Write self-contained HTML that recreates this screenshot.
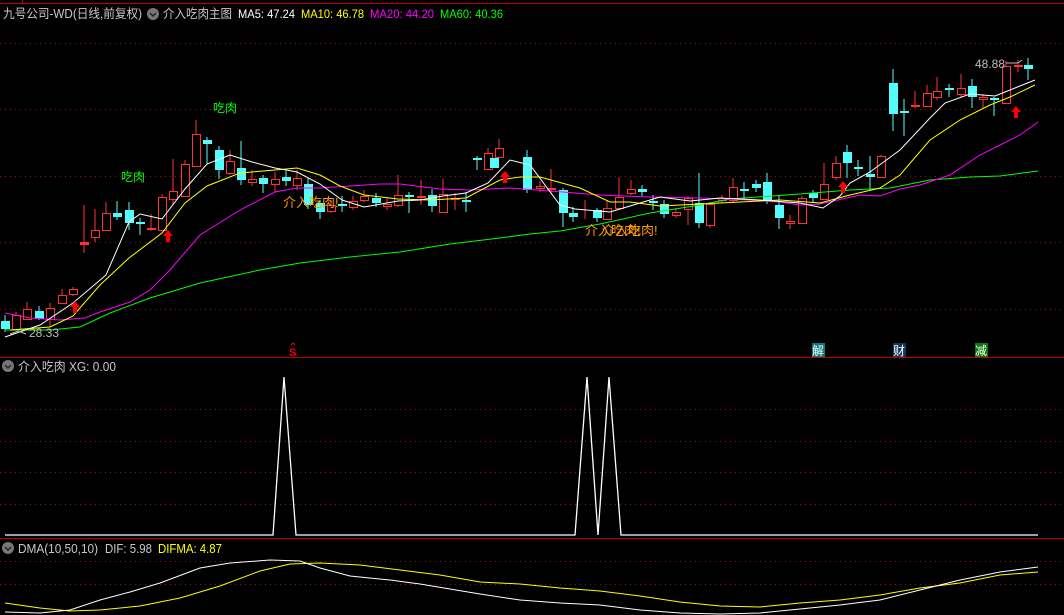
<!DOCTYPE html>
<html><head><meta charset="utf-8"><style>
html,body{margin:0;padding:0;background:#000;width:1064px;height:615px;overflow:hidden}
svg{display:block}
text{font-family:"Liberation Sans","Noto Sans CJK SC",sans-serif}
</style></head><body>
<svg width="1064" height="615" viewBox="0 0 1064 615" xmlns="http://www.w3.org/2000/svg">
<rect width="1064" height="615" fill="#000"/>
<!-- borders -->
<g shape-rendering="crispEdges">
<line x1="0" y1="3.5" x2="1064" y2="3.5" stroke="#c00000"/>
<line x1="22.5" y1="0" x2="22.5" y2="4" stroke="#c00000"/>
<line x1="0" y1="357.5" x2="1064" y2="357.5" stroke="#c00000"/>
<line x1="0" y1="538.5" x2="1064" y2="538.5" stroke="#c00000"/>
<!-- grid -->
<g stroke="#9a1010" stroke-dasharray="1,4">
<line x1="0" y1="43.5" x2="1064" y2="43.5"/><line x1="0" y1="109.5" x2="1064" y2="109.5"/>
<line x1="0" y1="176.5" x2="1064" y2="176.5"/><line x1="0" y1="242.5" x2="1064" y2="242.5"/>
<line x1="0" y1="309.5" x2="1064" y2="309.5"/>
<line x1="0" y1="409.5" x2="1064" y2="409.5"/><line x1="0" y1="441.5" x2="1064" y2="441.5"/>
<line x1="0" y1="472.5" x2="1064" y2="472.5"/><line x1="0" y1="504.5" x2="1064" y2="504.5"/>
<line x1="0" y1="561.5" x2="1064" y2="561.5"/><line x1="0" y1="584.5" x2="1064" y2="584.5"/>
</g>
</g>
<!-- header -->
<text x="3" y="18" font-size="12.5" fill="#c8c8c8" textLength="139" lengthAdjust="spacingAndGlyphs">九号公司-WD(日线,前复权)</text>
<circle cx="153" cy="14" r="6" fill="#777"/><path d="M150 13l3 3 3-3" stroke="#222" stroke-width="1.5" fill="none"/>
<text x="163" y="18" font-size="12.5" fill="#c8c8c8" textLength="69" lengthAdjust="spacingAndGlyphs">介入吃肉主图</text>
<text x="238" y="18" font-size="12" fill="#fff" textLength="57" lengthAdjust="spacingAndGlyphs">MA5: 47.24</text>
<text x="301" y="18" font-size="12" fill="#ffff00" textLength="63" lengthAdjust="spacingAndGlyphs">MA10: 46.78</text>
<text x="370" y="18" font-size="12" fill="#ff00ff" textLength="64" lengthAdjust="spacingAndGlyphs">MA20: 44.20</text>
<text x="440" y="18" font-size="12" fill="#00ff00" textLength="63" lengthAdjust="spacingAndGlyphs">MA60: 40.36</text>

<!-- wicks -->
<g stroke-width="1">
<g stroke="#ff3232">
<line x1="16" y1="312" x2="16" y2="330"/><line x1="27" y1="302" x2="27" y2="320"/><line x1="50" y1="303" x2="50" y2="327"/>
<line x1="62" y1="289" x2="62" y2="304"/><line x1="73" y1="287" x2="73" y2="296"/><line x1="84" y1="205" x2="84" y2="253"/>
<line x1="95" y1="209" x2="95" y2="242"/><line x1="106" y1="202" x2="106" y2="231"/><line x1="151" y1="214" x2="151" y2="231"/>
<line x1="162" y1="194" x2="162" y2="231"/><line x1="173" y1="159" x2="173" y2="205"/><line x1="185" y1="160" x2="185" y2="197"/>
<line x1="196" y1="120" x2="196" y2="167"/><line x1="230" y1="150" x2="230" y2="175"/><line x1="252" y1="170" x2="252" y2="186"/>
<line x1="275" y1="172" x2="275" y2="192"/><line x1="297" y1="170" x2="297" y2="190"/><line x1="331" y1="200" x2="331" y2="213"/>
<line x1="353" y1="196" x2="353" y2="210"/><line x1="364" y1="190" x2="364" y2="202"/><line x1="387" y1="198" x2="387" y2="210"/>
<line x1="398" y1="175" x2="398" y2="207"/><line x1="421" y1="180" x2="421" y2="205"/><line x1="443" y1="179" x2="443" y2="213"/>
<line x1="455" y1="193" x2="455" y2="210"/><line x1="488" y1="148" x2="488" y2="170"/><line x1="499" y1="139" x2="499" y2="158"/>
<line x1="540" y1="181" x2="540" y2="192"/><line x1="551" y1="169" x2="551" y2="193"/><line x1="585" y1="200" x2="585" y2="219"/>
<line x1="607" y1="200" x2="607" y2="220"/><line x1="619" y1="177" x2="619" y2="210"/><line x1="631" y1="180" x2="631" y2="195"/>
<line x1="676" y1="208" x2="676" y2="218"/><line x1="688" y1="196" x2="688" y2="225"/><line x1="710" y1="202" x2="710" y2="228"/>
<line x1="722" y1="195" x2="722" y2="203"/><line x1="733" y1="178" x2="733" y2="202"/><line x1="790" y1="215" x2="790" y2="229"/>
<line x1="802" y1="196" x2="802" y2="224"/><line x1="824" y1="163" x2="824" y2="200"/><line x1="836" y1="156" x2="836" y2="180"/>
<line x1="881" y1="155" x2="881" y2="178"/><line x1="915" y1="91" x2="915" y2="108"/><line x1="927" y1="85" x2="927" y2="107"/>
<line x1="937" y1="77" x2="937" y2="100"/><line x1="961" y1="74" x2="961" y2="97"/><line x1="983" y1="94" x2="983" y2="108"/>
<line x1="1006" y1="61" x2="1006" y2="104"/><line x1="1018" y1="60" x2="1018" y2="72"/>
</g>
<g stroke="#54fcfc">
<line x1="5" y1="315" x2="5" y2="332"/><line x1="39" y1="306" x2="39" y2="320"/><line x1="117" y1="201" x2="117" y2="220"/>
<line x1="129" y1="202" x2="129" y2="230"/><line x1="140" y1="218" x2="140" y2="235"/><line x1="207" y1="137" x2="207" y2="164"/>
<line x1="219" y1="146" x2="219" y2="179"/><line x1="241" y1="141" x2="241" y2="185"/><line x1="263" y1="175" x2="263" y2="193"/>
<line x1="286" y1="171" x2="286" y2="186"/><line x1="308" y1="178" x2="308" y2="209"/><line x1="320" y1="200" x2="320" y2="219"/>
<line x1="342" y1="196" x2="342" y2="212"/><line x1="376" y1="193" x2="376" y2="207"/><line x1="409" y1="192" x2="409" y2="213"/>
<line x1="432" y1="189" x2="432" y2="212"/><line x1="466" y1="192" x2="466" y2="212"/><line x1="477" y1="156" x2="477" y2="170"/>
<line x1="527" y1="150" x2="527" y2="193"/><line x1="563" y1="188" x2="563" y2="227"/><line x1="573" y1="207" x2="573" y2="222"/>
<line x1="597" y1="208" x2="597" y2="222"/><line x1="642" y1="185" x2="642" y2="197"/><line x1="653" y1="195" x2="653" y2="210"/>
<line x1="664" y1="200" x2="664" y2="218"/><line x1="699" y1="173" x2="699" y2="228"/><line x1="744" y1="182" x2="744" y2="200"/>
<line x1="756" y1="180" x2="756" y2="192"/><line x1="767" y1="173" x2="767" y2="204"/><line x1="779" y1="195" x2="779" y2="229"/>
<line x1="813" y1="190" x2="813" y2="203"/><line x1="847" y1="145" x2="847" y2="178"/><line x1="858" y1="160" x2="858" y2="176"/>
<line x1="870" y1="156" x2="870" y2="190"/><line x1="893" y1="69" x2="893" y2="131"/><line x1="904" y1="99" x2="904" y2="136"/>
<line x1="949" y1="84" x2="949" y2="97"/><line x1="972" y1="79" x2="972" y2="108"/><line x1="994" y1="97" x2="994" y2="116"/>
<line x1="1028" y1="58" x2="1028" y2="80"/>
</g>
</g>
<!-- red hollow bodies -->
<g fill="#000" stroke="#ff3232">
<rect x="12.5" y="315.5" width="8" height="14"/><rect x="23.5" y="309.5" width="8" height="10"/><rect x="46.5" y="308.5" width="8" height="11"/>
<rect x="58.5" y="295.5" width="8" height="8"/><rect x="69.5" y="289.5" width="8" height="5"/><rect x="91.5" y="230.5" width="8" height="7"/>
<rect x="102.5" y="213.5" width="8" height="17"/><rect x="158.5" y="197.5" width="8" height="33"/><rect x="169.5" y="191.5" width="8" height="8"/>
<rect x="181.5" y="164.5" width="8" height="32"/><rect x="192.5" y="134.5" width="8" height="32"/><rect x="226.5" y="161.5" width="8" height="12"/>
<rect x="248.5" y="179.5" width="8" height="3"/><rect x="271.5" y="179.5" width="8" height="5"/><rect x="293.5" y="178.5" width="8" height="7"/>
<rect x="327.5" y="205.5" width="8" height="6"/><rect x="349.5" y="201.5" width="8" height="6"/><rect x="360.5" y="196.5" width="8" height="4"/>
<rect x="383.5" y="204.5" width="8" height="2"/><rect x="394.5" y="195.5" width="8" height="10"/><rect x="439.5" y="194.5" width="8" height="18"/>
<rect x="484.5" y="153.5" width="8" height="16"/><rect x="495.5" y="148.5" width="8" height="9"/><rect x="536.5" y="186.5" width="8" height="2"/>
<rect x="603.5" y="208.5" width="8" height="11"/><rect x="615.5" y="197.5" width="8" height="11"/><rect x="627.5" y="189.5" width="8" height="4"/>
<rect x="672.5" y="212.5" width="8" height="3"/><rect x="684.5" y="198.5" width="8" height="11"/><rect x="706.5" y="204.5" width="8" height="21"/>
<rect x="718.5" y="198.5" width="8" height="2"/><rect x="729.5" y="187.5" width="8" height="13"/><rect x="786.5" y="221.5" width="8" height="2"/>
<rect x="798.5" y="198.5" width="8" height="25"/><rect x="820.5" y="184.5" width="8" height="15"/><rect x="832.5" y="163.5" width="8" height="14"/>
<rect x="877.5" y="156.5" width="8" height="21"/><rect x="923.5" y="93.5" width="8" height="13"/><rect x="933.5" y="91.5" width="8" height="6"/>
<rect x="957.5" y="88.5" width="8" height="6"/><rect x="979.5" y="97.5" width="8" height="2"/><rect x="1002.5" y="66.5" width="8" height="37"/>
</g>
<!-- red solid thin -->
<g fill="#ff3232">
<rect x="80" y="242" width="9" height="3"/><rect x="147" y="228" width="9" height="2"/><rect x="417" y="196" width="9" height="2"/>
<rect x="451" y="198" width="9" height="2"/><rect x="547" y="188" width="9" height="2"/><rect x="911" y="105" width="9" height="2"/>
<rect x="1014" y="65" width="9" height="2"/>
</g>
<!-- cyan bodies -->
<g fill="#54fcfc">
<rect x="1" y="321" width="9" height="8"/><rect x="35" y="311" width="9" height="8"/><rect x="113" y="213" width="9" height="4"/>
<rect x="125" y="210" width="9" height="13"/><rect x="136" y="222" width="9" height="2"/><rect x="203" y="140" width="9" height="4"/>
<rect x="215" y="150" width="9" height="20"/><rect x="237" y="168" width="9" height="12"/><rect x="259" y="178" width="9" height="6"/>
<rect x="282" y="177" width="9" height="4"/><rect x="304" y="184" width="9" height="21"/><rect x="316" y="203" width="9" height="9"/>
<rect x="338" y="204" width="9" height="2"/><rect x="372" y="198" width="9" height="5"/><rect x="405" y="195" width="9" height="2"/>
<rect x="428" y="195" width="9" height="11"/><rect x="462" y="200" width="9" height="2"/><rect x="473" y="158" width="9" height="2"/>
<rect x="490" y="158" width="9" height="10"/><rect x="523" y="157" width="9" height="33"/><rect x="559" y="190" width="9" height="23"/>
<rect x="569" y="213" width="9" height="4"/><rect x="593" y="210" width="9" height="8"/><rect x="638" y="189" width="9" height="3"/>
<rect x="649" y="201" width="9" height="2"/><rect x="660" y="204" width="9" height="10"/><rect x="695" y="203" width="9" height="20"/>
<rect x="740" y="189" width="9" height="2"/><rect x="752" y="184" width="9" height="4"/><rect x="763" y="182" width="9" height="18"/>
<rect x="775" y="205" width="9" height="13"/><rect x="809" y="193" width="9" height="5"/><rect x="843" y="152" width="9" height="11"/>
<rect x="854" y="167" width="9" height="2"/><rect x="866" y="174" width="9" height="3"/><rect x="889" y="83" width="9" height="31"/>
<rect x="900" y="111" width="9" height="2"/><rect x="945" y="88" width="9" height="2"/><rect x="968" y="86" width="9" height="11"/>
<rect x="990" y="98" width="9" height="2"/><rect x="1024" y="65" width="9" height="4"/>
</g>
<!-- MAs -->
<g fill="none" stroke-width="1">
<polyline stroke="#00ff00" points="5,330 30,330 50,330 80,327 110,313 150,298 200,283 260,270 300,263 350,257 400,252 450,244 500,238 530,234 560,231 600,224 650,213 700,205 730,199 800,194 850,190 890,188 930,180 970,177 1000,176 1038,171"/>
<polyline stroke="#ff00ff" points="5,313 30,318 60,320 85,318 100,312 130,302 150,290 170,270 200,235 240,210 275,192 297,188 320,188 350,186 380,184 400,184 440,189 470,190 510,188 550,191 600,195 650,197 700,198 730,199 780,202 800,205 820,204 860,195 880,196 900,189 920,185 950,175 980,155 1000,145 1020,135 1038,122"/>
<polyline stroke="#ffff00" points="10,330 50,327 73,316 100,285 129,258 162,233 185,203 207,186 240,173 275,170 297,168 320,175 340,186 364,195 398,199 430,200 466,198 500,180 520,177 540,177 580,188 610,202 630,202 660,206 700,204 740,202 780,200 820,203 850,195 880,188 900,175 930,140 960,120 990,105 1010,97 1035,85"/>
<polyline stroke="#ffffff" points="5,337 40,325 73,303 106,275 129,222 140,214 162,219 185,189 207,164 230,155 252,162 275,168 297,172 320,184 342,200 364,207 398,201 420,200 443,196 466,193 488,183 510,160 530,165 560,205 575,209 610,212 640,203 660,197 690,201 720,198 760,200 800,203 823,208 840,196 850,183 870,172 900,150 930,118 945,103 970,94 995,96 1010,90 1035,80"/>
</g>
<!-- arrows -->
<g fill="#ff0000">
<path d="M75 301l-5 6h3v6h4v-6h3z"/><path d="M168 230l-5 6h3v6h4v-6h3z"/><path d="M505 171l-5 6h3v6h4v-6h3z"/>
<path d="M843 181l-5 6h3v6h4v-6h3z"/><path d="M1016 106l-5 6h3v6h4v-6h3z"/>
</g>
<text x="121" y="181" font-size="12" fill="#00ff00">吃肉</text>
<text x="213" y="112" font-size="12" fill="#00ff00">吃肉</text>
<text x="283" y="207" font-size="13" fill="#ff9900">介入吃肉!</text>
<text x="585" y="235" font-size="13" fill="#ff9900">介入吃肉!</text>
<text x="602" y="235" font-size="13" fill="#ff9900">介入吃肉!</text>
<text x="975" y="68" font-size="12" fill="#bbb">48.88</text>
<path d="M1006 63h12l4-3" stroke="#bbb" fill="none"/>
<text x="29" y="337" font-size="12" fill="#bbb">28.33</text>
<path d="M10 334l8 -3 8 3" stroke="#bbb" fill="none"/>
<!-- markers -->
<text x="289" y="356" font-size="11" font-weight="bold" fill="#ff0000">S</text>
<path d="M291 345l2-2 2 2" stroke="#f00" fill="none"/>
<rect x="812" y="343" width="13" height="14" fill="#0a7a7a"/><text x="812" y="355" font-size="12" fill="#fff">解</text>
<rect x="893" y="343" width="13" height="14" fill="#10385e"/><text x="893" y="355" font-size="12" fill="#fff">财</text>
<rect x="975" y="343" width="13" height="14" fill="#0a7a0a"/><text x="975" y="355" font-size="12" fill="#fff">减</text>
<!-- panel 2 -->
<circle cx="8" cy="366" r="6" fill="#777"/><path d="M5 365l3 3 3-3" stroke="#222" stroke-width="1.5" fill="none"/>
<text x="18" y="371" font-size="12.5" fill="#c8c8c8" textLength="98" lengthAdjust="spacingAndGlyphs">介入吃肉 XG: 0.00</text>
<polyline fill="none" stroke="#fff" stroke-width="1.3" points="5,535 273,535 284,377 296,535 575,535 587,377 598,535 609,377 621,535 1038,535"/>
<!-- panel 3 -->
<circle cx="8" cy="548" r="6" fill="#777"/><path d="M5 547l3 3 3-3" stroke="#222" stroke-width="1.5" fill="none"/>
<text x="18" y="553" font-size="12.5" fill="#c8c8c8" textLength="80" lengthAdjust="spacingAndGlyphs">DMA(10,50,10)</text>
<text x="105" y="553" font-size="12.5" fill="#c8c8c8" textLength="47" lengthAdjust="spacingAndGlyphs">DIF: 5.98</text>
<text x="158" y="553" font-size="12.5" fill="#ffff00" textLength="64" lengthAdjust="spacingAndGlyphs">DIFMA: 4.87</text>
<polyline fill="none" stroke="#ffff00" points="5,603 40,608 70,611 100,610 140,606 180,598 220,586 260,571 290,564 320,563 360,565 400,570 440,575 480,582 520,584 560,588 600,591 640,596 680,602 720,606 760,607 800,603 840,600 880,595 920,588 960,583 1000,575 1038,572"/>
<polyline fill="none" stroke="#fff" points="5,612 40,613 70,610 100,600 130,592 160,583 200,568 230,563 270,560 300,561 320,568 350,576 390,580 420,584 450,589 480,594 520,600 560,603 600,605 640,610 680,613 720,614 760,613 800,609 840,605 880,600 920,590 960,580 1000,572 1038,567"/>
</svg>
</body></html>
